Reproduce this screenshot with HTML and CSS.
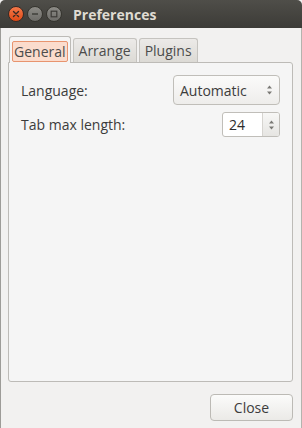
FILE: index.html
```html
<!DOCTYPE html>
<html lang="en">
<head>
    <meta charset="UTF-8">
    <title>Preferences</title>
    <link rel="stylesheet" href="styles.css">
</head>
<body>
    <div class="window">
        <div class="titlebar">
            <div class="win-buttons">
                <span class="win-btn close-btn">
                    <svg width="8" height="8" viewBox="0 0 8 8"><path d="M1.5 1.5 L6.5 6.5 M6.5 1.5 L1.5 6.5" stroke="#3a2a24" stroke-width="1.4" stroke-linecap="round"/></svg>
                </span>
                <span class="win-btn">
                    <svg width="8" height="8" viewBox="0 0 8 8"><path d="M1 4 H7" stroke="#3c3b37" stroke-width="1.4"/></svg>
                </span>
                <span class="win-btn">
                    <svg width="8" height="8" viewBox="0 0 8 8"><rect x="1.2" y="1.2" width="5.6" height="5.6" fill="none" stroke="#3c3b37" stroke-width="1.2"/></svg>
                </span>
            </div>
            <div class="title">Preferences</div>
        </div>

        <div class="content">
            <div class="tabs">
                <div class="tab active"><span class="focus">General</span></div>
                <div class="tab">Arrange</div>
                <div class="tab">Plugins</div>
            </div>
            <div class="panel">
                <div class="row">
                    <span class="label">Language:</span>
                    <div class="combo">
                        <span>Automatic</span>
                        <span class="arrows">
                            <svg width="7" height="12" viewBox="0 0 7 12"><path d="M3.5 1.5 L6 4.5 H1 Z M3.5 10.5 L6 7.5 H1 Z" fill="#7a7975"/></svg>
                        </span>
                    </div>
                </div>
                <div class="row">
                    <span class="label">Tab max length:</span>
                    <div class="spin">
                        <span class="spin-value">24</span>
                        <span class="spin-buttons">
                            <svg width="7" height="12" viewBox="0 0 7 12"><path d="M3.5 1.5 L6 4.5 H1 Z M3.5 10.5 L6 7.5 H1 Z" fill="#7a7975"/></svg>
                        </span>
                    </div>
                </div>
            </div>
            <div class="actions">
                <button class="button">Close</button>
            </div>
        </div>
    </div>
</body>
</html>
```
FILE: styles.css
```css
* {
    margin: 0;
    padding: 0;
    box-sizing: border-box;
}

body {
    font-family: "Open Sans", "Noto Sans", sans-serif;
    font-size: 14px;
    color: #3c3c3c;
    background: #f2f1f0;
}

.window {
    width: 302px;
    height: 428px;
    display: flex;
    flex-direction: column;
}

.titlebar {
    height: 28px;
    flex-shrink: 0;
    display: flex;
    align-items: center;
    background: linear-gradient(#4f4e49, #3c3b37);
    border-radius: 5px 5px 0 0;
}

.win-buttons {
    display: flex;
    gap: 3px;
    padding-left: 8px;
}

.win-btn {
    width: 16px;
    height: 16px;
    border-radius: 50%;
    background: linear-gradient(#8c8b86, #6d6c68);
    border: 1px solid #36352f;
    display: flex;
    align-items: center;
    justify-content: center;
}

.close-btn {
    background: linear-gradient(#f5794a, #df4a16);
    border-color: #3a2a24;
}

.title {
    margin-left: 11px;
    font-weight: bold;
    font-size: 14px;
    color: #dfdbd2;
}

.content {
    flex: 1;
    display: flex;
    flex-direction: column;
    border-left: 1px solid #9d9c98;
    border-right: 1px solid #b4b3ae;
    padding: 8px 8px 8px 7px;
}

.tabs {
    display: flex;
    gap: 2px;
    padding-left: 1px;
    position: relative;
    z-index: 1;
}

.tab {
    height: 24px;
    margin-top: 2px;
    padding: 0 5px;
    display: flex;
    align-items: center;
    border: 1px solid #c5c3bf;
    border-bottom: none;
    border-radius: 3px 3px 0 0;
    background: linear-gradient(#eceae8, #dcdad5);
    color: #4c4c4c;
}

.tab.active {
    margin-top: 0;
    margin-bottom: -1px;
    height: 27px;
    padding: 0 2px;
    background: #f5f5f5;
    border-color: #bdbbb7;
}

.focus {
    height: 21px;
    margin-top: 2px;
    padding: 0 1px;
    display: flex;
    align-items: center;
    border: 1px solid #e8946f;
    border-radius: 2px;
    background: #fbdccd;
}

.panel {
    height: 320px;
    background: #f5f5f5;
    border: 1px solid #bdbbb7;
    border-radius: 0 3px 3px 3px;
    padding: 12px 12px 0 12px;
    display: flex;
    flex-direction: column;
    gap: 7px;
}

.row {
    display: flex;
    align-items: center;
    justify-content: space-between;
}

.combo {
    width: 107px;
    height: 30px;
    border: 1px solid #c0beb9;
    border-radius: 4px;
    background: linear-gradient(#fbfbfa, #eeedeb);
    display: flex;
    align-items: center;
    justify-content: space-between;
    padding: 0 6px;
    color: #3c3c3c;
}

.arrows,
.spin-buttons {
    display: flex;
    align-items: center;
}

.spin {
    width: 58px;
    height: 25px;
    border: 1px solid #c0beb9;
    border-radius: 3px;
    display: flex;
    overflow: hidden;
    background: #fff;
}

.spin-value {
    flex: 1;
    padding-left: 6px;
    display: flex;
    align-items: center;
    color: #2c2c2c;
}

.spin-buttons {
    width: 17px;
    justify-content: center;
    border-left: 1px solid #d6d4d0;
    background: linear-gradient(#f7f7f6, #e6e5e2);
}

.actions {
    display: flex;
    justify-content: flex-end;
    margin-top: 12px;
}

.button {
    width: 83px;
    height: 27px;
    font-family: inherit;
    font-size: 14px;
    color: #3c3c3c;
    border: 1px solid #bcbab5;
    border-radius: 4px;
    background: linear-gradient(#fbfbfa, #ebeae7);
}
```
